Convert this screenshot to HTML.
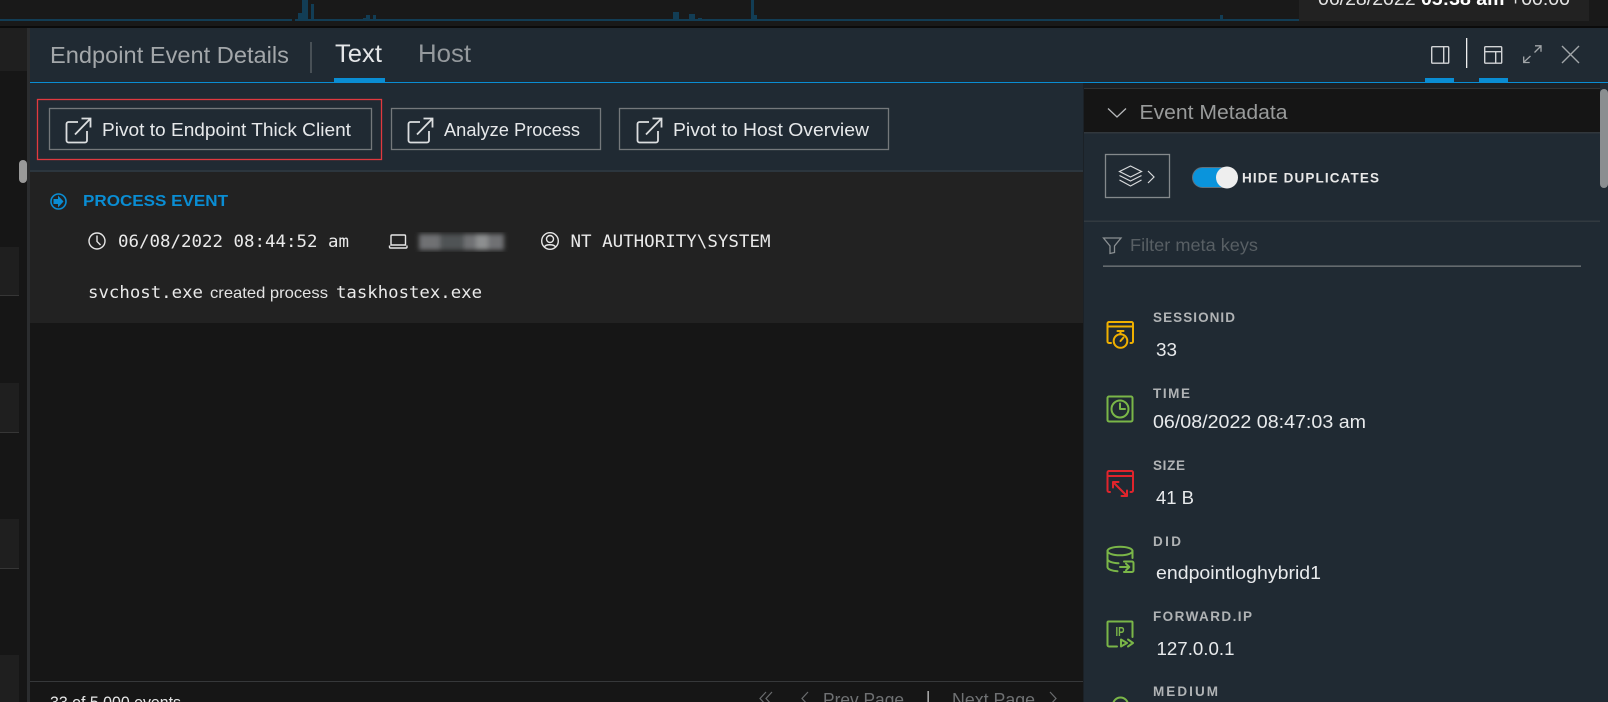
<!DOCTYPE html>
<html><head><meta charset="utf-8"><style>
html,body{margin:0;padding:0;background:#161616;overflow:hidden}
svg{display:block}
text{font-family:"Liberation Sans",sans-serif}
.m{font-family:"DejaVu Sans Mono","Liberation Mono",monospace;font-size:17px;fill:#eaeaea}
.k{font-size:13.500px;font-weight:bold;fill:#b0b3b5}
.v{font-size:18px;fill:#e8eaec}
.b{font-size:18.500px;fill:#e6e8ea}
</style></head><body>
<svg xmlns="http://www.w3.org/2000/svg" width="1608" height="702" viewBox="0 0 1608 702">
<defs><filter id="bl"><feGaussianBlur stdDeviation="2.400"/></filter></defs>
<rect width="1608" height="702" fill="#161616"/>
<!-- top chart -->
<rect width="1608" height="26" fill="#191919"/>
<rect x="0" y="19" width="1299" height="2" fill="#123d55"/>
<rect x="292" y="19" width="3" height="2" fill="#191919"/>
<g fill="#123d55">
<rect x="298" y="13" width="5" height="7"/><rect x="302" y="0" width="6" height="20"/><rect x="311" y="4" width="3" height="16"/>
<rect x="363" y="18" width="4" height="2"/><rect x="366" y="15" width="4" height="5"/><rect x="373" y="15" width="3" height="5"/>
<rect x="673" y="12" width="6" height="8"/><rect x="689" y="14" width="6" height="6"/><rect x="698" y="18" width="4" height="2"/>
<rect x="751" y="0" width="3" height="20"/><rect x="754" y="15" width="3" height="5"/><rect x="1220" y="15" width="3" height="5"/>
</g>
<rect x="1299" y="0" width="290" height="21" fill="#222"/>
<text x="1318" y="5" font-size="18" fill="#e4e4e4" textLength="252" lengthAdjust="spacingAndGlyphs">06/28/2022 <tspan font-weight="bold" fill="#fff">05:38 am</tspan> +00:00</text>
<rect x="0" y="26" width="1608" height="2" fill="#0b0b0b"/>

<!-- left strip -->
<rect x="0" y="28" width="27" height="43" fill="#1f1f1f"/>
<rect x="19" y="160" width="8" height="23" rx="4" fill="#999"/>
<g fill="#1f1f1f">
<rect x="0" y="247" width="19" height="48"/><rect x="0" y="383" width="19" height="49"/><rect x="0" y="519" width="19" height="49"/><rect x="0" y="655" width="19" height="47"/>
</g>
<g fill="#363636">
<rect x="0" y="295" width="19" height="1"/><rect x="0" y="432" width="19" height="1"/><rect x="0" y="568" width="19" height="1"/>
</g>
<rect x="27" y="28" width="3" height="674" fill="#2b2d2f"/>

<!-- panel -->
<rect x="30" y="28" width="1578" height="54" fill="#202a33"/>
<rect x="30" y="83" width="1053" height="89" fill="#202a33"/>
<rect x="30" y="170" width="1053" height="2" fill="#2c363e"/>
<rect x="30" y="82" width="1578" height="1" fill="#0a8dd3"/>
<text x="50" y="63" font-size="23" fill="#a3a7aa" textLength="239" lengthAdjust="spacingAndGlyphs">Endpoint Event Details</text>
<rect x="310.500" y="42" width="1" height="31" fill="#70767a"/>
<text x="335" y="62" font-size="25" fill="#e4e6e8" textLength="47" lengthAdjust="spacingAndGlyphs">Text</text>
<rect x="334" y="78" width="51" height="4" fill="#0a8dd3"/>
<text x="418" y="62" font-size="25" fill="#94999d" textLength="53" lengthAdjust="spacingAndGlyphs">Host</text>

<!-- header icons -->
<g fill="none" stroke="#d2d4d6" stroke-width="1.400">
<rect x="1431.700" y="46.700" width="17" height="16.500" rx="1"/><path d="M1443.700 46.700v16.500"/>
<rect x="1484.700" y="46.700" width="17" height="16.500" rx="1"/><path d="M1484.700 51.700h17M1495.700 51.700v11.500"/>
</g>
<rect x="1466" y="38" width="1.300" height="30" fill="#eee"/>
<g fill="none" stroke="#a2a6a9" stroke-width="1.300">
<path d="M1523.500 62.500L1530.500 56M1534.500 52.500L1541 46M1535 45.800h6v6M1523.700 56.500v6h6"/>
<path d="M1562 46l17 17M1579 46l-17 17" stroke-width="1.400"/>
</g>
<rect x="1425" y="78" width="29" height="4" fill="#0a8dd3"/>
<rect x="1479" y="78" width="29" height="4" fill="#0a8dd3"/>

<!-- buttons -->
<rect x="37.500" y="99.500" width="344" height="60" fill="none" stroke="#e0393f" stroke-width="1.300"/>
<g fill="none" stroke="#74787b" stroke-width="1.300">
<rect x="49.500" y="108.500" width="322" height="41"/>
<rect x="391.500" y="108.500" width="209" height="41"/>
<rect x="619.500" y="108.500" width="269" height="41"/>
</g>
<g fill="none" stroke="#dcdee0" stroke-width="1.800">
<path d="M78 122H68.500a2 2 0 0 0-2 2v16.500a2 2 0 0 0 2 2H85a2 2 0 0 0 2-2V131"/>
<path d="M75 134.500L90 119M81.500 118.500h9v9"/>
</g>
<g fill="none" stroke="#dcdee0" stroke-width="1.800" transform="translate(342 0)">
<path d="M78 122H68.500a2 2 0 0 0-2 2v16.500a2 2 0 0 0 2 2H85a2 2 0 0 0 2-2V131"/>
<path d="M75 134.500L90 119M81.500 118.500h9v9"/>
</g>
<g fill="none" stroke="#dcdee0" stroke-width="1.800" transform="translate(571 0)">
<path d="M78 122H68.500a2 2 0 0 0-2 2v16.500a2 2 0 0 0 2 2H85a2 2 0 0 0 2-2V131"/>
<path d="M75 134.500L90 119M81.500 118.500h9v9"/>
</g>
<text class="b" x="102" y="136" textLength="249" lengthAdjust="spacingAndGlyphs">Pivot to Endpoint Thick Client</text>
<text class="b" x="444" y="136" textLength="136" lengthAdjust="spacingAndGlyphs">Analyze Process</text>
<text class="b" x="673" y="136" textLength="196" lengthAdjust="spacingAndGlyphs">Pivot to Host Overview</text>

<!-- event -->
<rect x="30" y="172" width="1053" height="151" fill="#222"/>
<circle cx="58.500" cy="201.500" r="7.500" fill="none" stroke="#0a8dd3" stroke-width="1.600"/>
<path d="M53.500 199h4.500v-3.500l5.500 6-5.500 6V204h-4.500z" fill="#0a8dd3"/>
<text x="83" y="206" font-size="15.500" font-weight="bold" fill="#0a8dd3" textLength="145" lengthAdjust="spacingAndGlyphs">PROCESS EVENT</text>
<g fill="none" stroke="#e6e6e6" stroke-width="1.400">
<circle cx="97" cy="241" r="8"/><path d="M97 235.500v6l3.500 3.500"/>
<path d="M392 235h12.500a1 1 0 0 1 1 1v9h-14.500v-9a1 1 0 0 1 1-1zM389.500 245.500v1.500a1 1 0 0 0 1 1h15.500a1 1 0 0 0 1-1v-1.500"/>
<circle cx="550" cy="241" r="8.300"/><circle cx="550" cy="239" r="3.500"/><path d="M544.500 247c1-3 9.500-3 11 0"/>
</g>
<text class="m" x="118" y="247" textLength="231" lengthAdjust="spacingAndGlyphs">06/08/2022 08:44:52 am</text>
<g filter="url(#bl)">
<rect x="419" y="234" width="85" height="16" fill="#6f7173"/>
<rect x="440" y="234" width="24" height="16" fill="#505355"/>
<rect x="476" y="234" width="12" height="16" fill="#8d8f90"/>
</g>
<text class="m" x="570.500" y="247" textLength="200" lengthAdjust="spacingAndGlyphs">NT AUTHORITY\SYSTEM</text>
<text class="m" x="88" y="298" textLength="115" lengthAdjust="spacingAndGlyphs">svchost.exe</text>
<text x="210" y="298" font-size="16" fill="#e4e4e4" textLength="118" lengthAdjust="spacingAndGlyphs">created process</text>
<text class="m" x="336" y="298" textLength="146" lengthAdjust="spacingAndGlyphs">taskhostex.exe</text>

<!-- footer -->
<rect x="30" y="681" width="1053" height="1" fill="#36383a"/>
<text x="50" y="708" font-size="17" fill="#e6e6e6" textLength="131" lengthAdjust="spacingAndGlyphs">33 of 5,000 events</text>
<g fill="none" stroke="#6a6c6e" stroke-width="1.200">
<path d="M766 692l-6 6.500 6 6.500M772 692l-6 6.500 6 6.500M808 692l-6 6.500 6 6.500M1050 692l6 6.500-6 6.500"/>
</g>
<text x="823" y="706" font-size="18" fill="#6f7173" textLength="81" lengthAdjust="spacingAndGlyphs">Prev Page</text>
<rect x="927.500" y="691" width="1.300" height="11" fill="#c8c8c8"/>
<text x="952" y="706" font-size="18" fill="#6f7173" textLength="83" lengthAdjust="spacingAndGlyphs">Next Page</text>

<!-- sidebar -->
<rect x="1083" y="83" width="525" height="619" fill="#202a33"/>
<rect x="1083" y="83" width="1" height="619" fill="#1b2127"/>
<rect x="1084" y="83" width="516" height="5" fill="#1c2024"/>
<rect x="1084" y="88" width="516" height="44" fill="#151515"/>
<rect x="1084" y="88" width="516" height="1" fill="#333"/>
<rect x="1084" y="132" width="516" height="1.500" fill="#31373c"/>
<path d="M1108 108.500l9 8.500 9-8.500" fill="none" stroke="#b6b8ba" stroke-width="1.300"/>
<text x="1139.500" y="119" font-size="20" fill="#999b9b" textLength="148" lengthAdjust="spacingAndGlyphs">Event Metadata</text>
<rect x="1105.500" y="154.500" width="64" height="43" fill="none" stroke="#84898c" stroke-width="1.300"/>
<g fill="none" stroke="#d8dadc" stroke-width="1.200">
<path d="M1130.500 166l11 5.500-11 5.500-11-5.500zM1119.500 175.500l11 5.500 11-5.500M1119.500 180l11 6 11-6"/>
<path d="M1148 171l6 6-6 6" stroke-width="1.200"/>
</g>
<rect x="1192.500" y="167.500" width="44.500" height="20" rx="10" fill="#0a94dc" stroke="#61727e"/>
<circle cx="1227" cy="177.500" r="11" fill="#eeeeee"/>
<text x="1242" y="182.500" font-size="13.500" font-weight="bold" fill="#e8e8e8" textLength="137" lengthAdjust="spacing">HIDE DUPLICATES</text>
<rect x="1084" y="220.500" width="516" height="1.500" fill="#323a40"/>
<path d="M1103.500 238h17.500l-6.500 8v6.500l-4.500 1v-7.500z" fill="none" stroke="#8a8f92" stroke-width="1.300"/>
<text x="1130" y="251" font-size="17.500" fill="#585f64" textLength="128" lengthAdjust="spacingAndGlyphs">Filter meta keys</text>
<rect x="1103" y="265.500" width="478" height="1.300" fill="#757a7d"/>
<rect x="1600" y="89" width="8" height="99" rx="4" fill="#8b8e90"/>

<!-- meta keys -->
<text class="k" x="1153" y="322" textLength="82" lengthAdjust="spacing">SESSIONID</text>
<text class="v" x="1156" y="356" textLength="21" lengthAdjust="spacingAndGlyphs">33</text>
<text class="k" x="1153" y="398" textLength="37" lengthAdjust="spacing">TIME</text>
<text class="v" x="1153" y="428" textLength="213" lengthAdjust="spacingAndGlyphs">06/08/2022 08:47:03 am</text>
<text class="k" x="1153" y="470" textLength="32" lengthAdjust="spacing">SIZE</text>
<text class="v" x="1156" y="504" textLength="38" lengthAdjust="spacingAndGlyphs">41 B</text>
<text class="k" x="1153" y="546" textLength="28" lengthAdjust="spacing">DID</text>
<text class="v" x="1156" y="579" textLength="165" lengthAdjust="spacingAndGlyphs">endpointloghybrid1</text>
<text class="k" x="1153" y="621" textLength="99" lengthAdjust="spacing">FORWARD.IP</text>
<text class="v" x="1156.500" y="655" textLength="78" lengthAdjust="spacingAndGlyphs">127.0.0.1</text>
<text class="k" x="1153" y="696" textLength="65" lengthAdjust="spacing">MEDIUM</text>

<!-- meta icons -->
<g fill="none" stroke="#f0b000" stroke-width="2" stroke-linejoin="round" stroke-linecap="round">
<path d="M1111 343h-2a1.500 1.500 0 0 1-1.500-1.500V323.500a1.500 1.500 0 0 1 1.500-1.500h22.500a1.500 1.500 0 0 1 1.500 1.500v18a1.500 1.500 0 0 1-1.500 1.500h-1"/>
<path d="M1107.500 326.500h25.500"/>
<circle cx="1120.500" cy="341" r="6.800"/>
<path d="M1117.500 331h6M1120.500 331v3M1120.500 341l3-3.500"/>
</g>
<g fill="none" stroke="#7ab648" stroke-width="2" stroke-linejoin="round" stroke-linecap="round">
<rect x="1107.500" y="396.500" width="25" height="25" rx="1.500"/>
<circle cx="1120" cy="409" r="8.500"/>
<path d="M1120 403.500v5.500h5"/>
</g>
<g fill="none" stroke="#e0242c" stroke-width="2" stroke-linejoin="round" stroke-linecap="round">
<path d="M1110 492h-1a1.500 1.500 0 0 1-1.500-1.500V472.500a1.500 1.500 0 0 1 1.500-1.500h22.500a1.500 1.500 0 0 1 1.500 1.500v18a1.500 1.500 0 0 1-1.500 1.500h-1"/>
<path d="M1107.500 476h25.500"/>
<path d="M1113 482l14 14M1113 487.500v-5.500h5.500M1127 490.500v5.500h-5.500"/>
</g>
<g fill="none" stroke="#7ab648" stroke-width="2" stroke-linejoin="round" stroke-linecap="round">
<ellipse cx="1120" cy="551" rx="12.500" ry="4.300"/>
<path d="M1107.500 551v16c0 2.500 5 4 10 4.300M1132.500 551v7M1107.500 559c0 2.500 5 4 11 4.300"/>
<path d="M1124 561.500h8a1.500 1.500 0 0 1 1.500 1.500v7.500a1.500 1.500 0 0 1-1.500 1.500h-8M1120 567h9M1126 563.700l3.300 3.300-3.300 3.300"/>
</g>
<g fill="none" stroke="#7ab648" stroke-width="2" stroke-linejoin="round" stroke-linecap="round">
<path d="M1117 646.500h-8a1.500 1.500 0 0 1-1.500-1.500V622.500a1 1 0 0 1 1-1h23a1 1 0 0 1 1 1V637"/>
<path d="M1121 639.500v7l6-3.500zM1128 639.500l5 3.500-5 3.500"/>
</g>
<text x="1115.500" y="636" font-size="13" font-weight="bold" fill="#7ab648" textLength="9" lengthAdjust="spacingAndGlyphs">IP</text>
<circle cx="1120.500" cy="705" r="7.500" fill="none" stroke="#7ab648" stroke-width="2"/>
</svg>
</body></html>
